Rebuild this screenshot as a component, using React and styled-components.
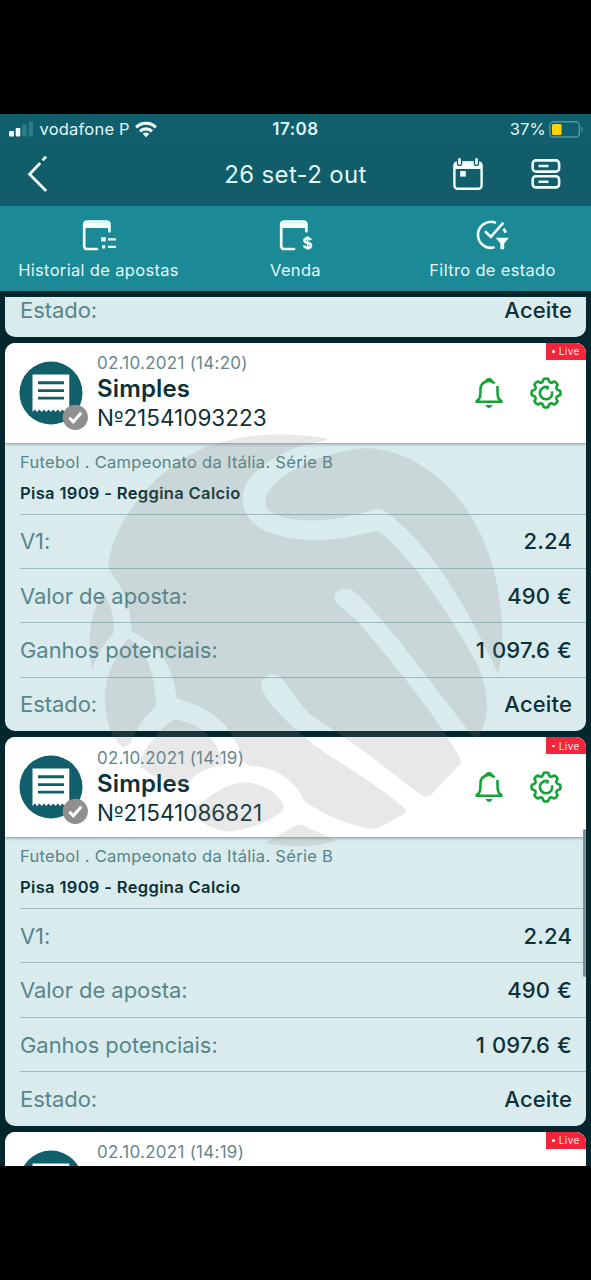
import styled, { createGlobalStyle } from 'styled-components';

const bets = [
  { id: 1, date: '02.10.2021 (14:20)', number: '21541093223' },
  { id: 2, date: '02.10.2021 (14:19)', number: '21541086821' },
  { id: 3, date: '02.10.2021 (14:19)' },
];

const rows = [
  { label: 'V1:', value: '2.24' },
  { label: 'Valor de aposta:', value: '490 €' },
  { label: 'Ganhos potenciais:', value: '1 097.6 €' },
  { label: 'Estado:', value: 'Aceite' },
];

const SignalIcon = () => (
  <svg width="25" height="16" viewBox="0 0 25 16">
    <rect x="0" y="10" width="5" height="5.6" rx="1" fill="#f2ffff" />
    <rect x="6.7" y="7" width="4.6" height="8.6" rx="1" fill="#f2ffff" />
    <rect x="13.2" y="3.6" width="4.4" height="12" rx="1" fill="#2b7d89" />
    <rect x="19.7" y="0.5" width="4.4" height="15.1" rx="1" fill="#2b7d89" />
  </svg>
);

const WifiIcon = () => (
  <svg width="22" height="17" viewBox="0 0 22 17" fill="none" stroke="#f2ffff" strokeWidth="3.1">
    <path d="M1.2 6.3a13.900 13.900 0 0 1 19.600 0" />
    <path d="M5 10.300a8.600 8.600 0 0 1 12 0" />
    <path d="M11 16.200l-3.300-3.400a4.700 4.700 0 0 1 6.600 0z" fill="#f2ffff" stroke="none" />
  </svg>
);

const BatteryIcon = () => (
  <svg width="35" height="17" viewBox="0 0 35 17">
    <rect x="0.8" y="0.8" width="29.6" height="15.2" rx="3.8" fill="none" stroke="#4d9aa5" strokeWidth="1.4" />
    <rect x="3" y="3" width="9.6" height="11" rx="1.6" fill="#ffd20a" />
    <path d="M32.400 5.800c1.600.8 1.600 4.400 0 5.200z" fill="#4d9aa5" />
  </svg>
);

const BackIcon = () => (
  <svg width="22" height="38" viewBox="0 0 22 38" fill="none" stroke="#f2ffff" strokeWidth="2.8">
    <path d="M19.200 36L2.600 19.300 13.200 8" />
    <path d="M15.600 5.400L19 1.600" />
  </svg>
);

const CalendarIcon = () => (
  <svg width="30" height="34" viewBox="0 0 30 34">
    <rect x="1.4" y="5.4" width="27.2" height="26.4" rx="3.2" fill="none" stroke="#f2ffff" strokeWidth="2.4" />
    <path d="M1 12V8a3.500 3.500 0 0 1 3.500-3.500h21A3.500 3.500 0 0 1 29 8v4z" fill="#f2ffff" />
    <rect x="3.8" y="-.2" width="5.4" height="9.2" rx="2.6" fill="#115d6a" />
    <rect x="20.8" y="-.2" width="5.4" height="9.2" rx="2.6" fill="#115d6a" />
    <rect x="5.1" y="1" width="2.8" height="7" rx="1.4" fill="#f2ffff" />
    <rect x="22.1" y="1" width="2.8" height="7" rx="1.4" fill="#f2ffff" />
    <rect x="7.2" y="14" width="5.6" height="5.6" fill="#f2ffff" />
  </svg>
);

const ListIcon = () => (
  <svg width="30" height="32" viewBox="0 0 30 32" fill="none" stroke="#f2ffff" strokeWidth="2.6">
    <rect x="1.7" y="2.4" width="26.4" height="11.2" rx="3.2" />
    <rect x="1.7" y="18.2" width="26.4" height="11.2" rx="3.2" />
    <path d="M7.500 8h10M7.500 23.800h10" />
  </svg>
);

const WindowShape = () => (
  <>
    <path
      d="M16 30H6a2.800 2.800 0 0 1-2.800-2.800V5.300A2.800 2.800 0 0 1 6 2.500h19.600a2.800 2.800 0 0 1 2.800 2.800v7"
      fill="none"
      stroke="#f2ffff"
      strokeWidth="2.7"
      strokeLinecap="round"
    />
    <path d="M3.200 3.500h25.200V9H3.200z" fill="#f2ffff" />
  </>
);

const HistoryIcon = () => (
  <svg width="36" height="32" viewBox="0 0 36 32">
    <WindowShape />
    <path d="M20.200 18.200h4.600v4.400h-4.600zM21 26.200h3.200v3.200H21z" fill="#f2ffff" />
    <path d="M27 20.400h8M27 27.800h8" stroke="#f2ffff" strokeWidth="2.2" />
  </svg>
);

const SaleIcon = () => (
  <svg width="36" height="32" viewBox="0 0 36 32">
    <WindowShape />
    <g fill="none" stroke="#f2ffff" strokeWidth="2.5">
      <path d="M32.800 21.200c-.5-1.400-1.700-1.900-3.200-1.900-2 0-3.200.9-3.200 2.300 0 3.500 6.700 1.200 6.700 4.800 0 1.500-1.400 2.400-3.400 2.400-1.900 0-3.300-.7-3.700-2.300" />
      <path d="M29.700 17.100v13.800" strokeWidth="1.6" />
    </g>
  </svg>
);

const FilterIcon = () => (
  <svg width="36" height="32" viewBox="0 0 36 32">
    <g fill="none" stroke="#f2ffff" strokeWidth="2.6" strokeLinecap="round">
      <path d="M20 3.500A13 13 0 1 0 18.600 28.600" />
      <path d="M10.800 13l5 4.800L27.800 4.400" />
    </g>
    <path d="M28.600 9.800l2.200 3.800" stroke="#f2ffff" strokeWidth="2.8" />
    <path d="M20.600 18.800H34L29.200 24.600v5.600h-3.800v-5.600z" fill="#f2ffff" />
  </svg>
);

const TicketIcon = () => (
  <svg width="70" height="72" viewBox="0 0 70 72">
    <circle cx="32" cy="32" r="31.5" fill="#105f6b" />
    <path
      d="M13.500 13.500h36.800V51l-2.300-2.600-2.300 2.600-2.300-2.600-2.300 2.600-2.300-2.600-2.300 2.600-2.300-2.600-2.300 2.600-2.300-2.600-2.300 2.600-2.300-2.600-2.300 2.600-2.300-2.600-2.300 2.600-2.300-2.600-2.300 2.600z"
      fill="#fff"
    />
    <path d="M19 21.800h26M19 29.600h26M19 37.100h26" stroke="#105f6b" strokeWidth="2.9" />
    <circle cx="56.3" cy="56.3" r="12.6" fill="#8f8f8f" />
    <path d="M50.300 56.800l4 4 8-9" fill="none" stroke="#fff" strokeWidth="3" />
  </svg>
);

const BellIcon = () => (
  <svg width="28" height="32" viewBox="0 0 28 32" fill="none" stroke="#14a336" strokeWidth="2.6">
    <path d="M19.600 6.400A8.300 8.300 0 0 0 5.500 12.600c0 6.200-.1 9.400-3.700 11.400v.8h24.400V24c-3.500-2-3.700-5.300-3.700-11.400V9" />
    <path d="M11.600 2.900q2.400-2.400 4.800 0z" fill="#14a336" strokeWidth="1.8" />
    <path d="M11.600 28.700q2.400 3.400 4.800 0z" fill="#14a336" strokeWidth="1.4" />
  </svg>
);

// eight teeth with rounded gaps between them
const teeth = Array.from({ length: 8 }, (_, i) => i * 45);
const gearPath = teeth
  .map((deg, i) => {
    const at = (r, a) => {
      const rad = ((deg + a - 90) * Math.PI) / 180;
      return `${(16 + r * Math.cos(rad)).toFixed(2)} ${(16 + r * Math.sin(rad)).toFixed(2)}`;
    };
    return `${i ? 'L' : 'M'}${at(14.2, -9.5)}Q${at(15, 0)} ${at(14.2, 9.5)}L${at(12.8, 12.5)}Q${at(10.2, 22.5)} ${at(12.8, 32.5)}`;
  })
  .join('');

const GearIcon = () => (
  <svg width="32" height="32" viewBox="0 0 32 32" fill="none" stroke="#14a336" strokeWidth="2.6" strokeLinejoin="round">
    <path d={`${gearPath}Z`} />
    <path d="M18.600 10.400a6.200 6.200 0 1 0 3.400 3.900" />
    <path d="M16.400 12.600l2.400-2" strokeWidth="1.6" />
  </svg>
);

const BallMark = () => (
  <Watermark viewBox="0 0 1320 1320">
    <path d="M740 55C620 35 480 40 370 85C230 145 110 290 85 425Q84 440 95 460C135 515 150 550 155 635C240 670 280 745 290 835C390 865 440 900 477 985C480 1020 490 1036 520 1038C600 1045 650 1090 672 1142C740 1190 810 1215 870 1226Q890 1228 910 1216L972 1182Q985 1173 972 1163C860 1070 760 1020 690 965C625 910 570 860 547 810C532 775 570 750 600 770C630 800 660 860 700 890C830 970 930 1055 1025 1126Q1040 1134 1055 1122L1138 1035Q1147 1025 1138 1010C1050 860 930 720 830 600L775 555C745 525 780 495 815 510C860 540 920 620 960 665L1175 945Q1186 962 1195 948C1240 880 1220 790 1185 720C1110 590 1010 430 905 340Q895 330 880 334C760 370 640 370 550 330C480 290 475 230 505 180C560 110 650 75 737 62Q744 58 740 55Z" />
    <path d="M855 85C730 95 600 155 563 220C540 265 570 285 640 298C720 308 800 295 880 268Q905 264 925 280C1060 390 1150 540 1255 762C1280 640 1265 490 1210 360C1140 200 1010 95 870 85Z" />
    <path d="M66 520C90 540 105 590 100 640C75 670 50 700 37 750C22 660 28 590 66 520Z" />
    <path d="M146 657C190 670 225 760 228 845Q228 860 216 870C190 895 170 925 152 970Q138 985 122 977C85 940 70 870 76 810C85 750 110 705 135 665Z" />
    <path d="M270 905Q285 895 305 903C370 920 415 960 430 1035C385 1040 345 1060 325 1088Q314 1100 298 1095C255 1085 215 1070 185 1043Q175 1033 182 1015C205 970 235 935 270 905Z" />
    <path d="M480 1088C530 1083 590 1110 610 1155Q615 1168 603 1177C560 1210 505 1228 445 1235C400 1230 350 1205 328 1170C370 1150 420 1095 480 1088Z" />
    <path d="M645 1217Q656 1210 670 1217L770 1262C700 1282 620 1282 555 1268Z" />
  </Watermark>
);

const DetailRow = ({ label, value, height }) => (
  <Row $height={height}>
    <Label>{label}</Label>
    <Value>{value}</Value>
  </Row>
);

const BetCard = ({ bet }) => (
  <Card>
    <CardHeader>
      <TicketIcon />
      <Summary>
        <BetDate>{bet.date}</BetDate>
        {bet.number && (
          <>
            <BetType>Simples</BetType>
            <BetNumber>N<sup>º</sup>{bet.number}</BetNumber>
          </>
        )}
      </Summary>
      <Actions>
        <BellIcon />
        <GearIcon />
      </Actions>
      <LiveBadge><i />Live</LiveBadge>
    </CardHeader>
    {bet.number && (
      <>
        <Match>
          <League>Futebol . Campeonato da Itália. Série B</League>
          <Teams>Pisa 1909 - Reggina Calcio</Teams>
        </Match>
        {rows.map((row) => (
          <DetailRow key={row.label} {...row} />
        ))}
      </>
    )}
  </Card>
);

const App = () => (
  <Screen>
    <GlobalStyle />
    <StatusBar>
      <Carrier>
        <SignalIcon />
        <StatusText>vodafone P</StatusText>
        <WifiIcon />
      </Carrier>
      <Clock>17:08</Clock>
      <Power>
        <StatusText>37%</StatusText>
        <BatteryIcon />
      </Power>
    </StatusBar>
    <NavBar>
      <BackIcon />
      <NavTitle>26 set-2 out</NavTitle>
      <NavActions>
        <CalendarIcon />
        <ListIcon />
      </NavActions>
    </NavBar>
    <Tabs>
      <Tab>
        <HistoryIcon />
        <TabLabel>Historial de apostas</TabLabel>
      </Tab>
      <Tab>
        <SaleIcon />
        <TabLabel>Venda</TabLabel>
      </Tab>
      <Tab>
        <FilterIcon />
        <TabLabel>Filtro de estado</TabLabel>
      </Tab>
    </Tabs>
    <List>
      <TailCard>
        <DetailRow label="Estado:" value="Aceite" height={26} />
      </TailCard>
      {bets.map((bet) => (
        <BetCard key={bet.id} bet={bet} />
      ))}
    </List>
    <BallMark />
    <ScrollThumb />
  </Screen>
);

export default App;

// Estilos
const GlobalStyle = createGlobalStyle`
  * {
    box-sizing: border-box;
  }

  body {
    margin: 0;
    background: #000;
    font-family: Inter, 'Liberation Sans', sans-serif;
  }

  svg {
    display: block;
    flex-shrink: 0;
  }
`;

const Screen = styled.div`
  position: relative;
  width: 591px;
  height: 1280px;
  padding: 114px 0;
  display: flex;
  flex-direction: column;
  overflow: hidden;
  background: #000;
  color: #e0f8fa;
`;

const StatusBar = styled.div`
  height: 30px;
  flex-shrink: 0;
  padding: 0 7px 0 9px;
  display: grid;
  grid-template-columns: 1fr auto 1fr;
  align-items: center;
  background: #115f6c;
`;

const Carrier = styled.div`
  display: flex;
  align-items: center;
  gap: 5.5px;
`;

const Power = styled.div`
  display: flex;
  align-items: center;
  justify-content: flex-end;
  gap: 3px;
`;

const StatusText = styled.span`
  font-size: 16.5px;
  letter-spacing: 0.2px;
  white-space: nowrap;
`;

const Clock = styled.span`
  margin-right: 2px;
  font-size: 17px;
  font-weight: 600;
  letter-spacing: 0.5px;
`;

const NavBar = styled.div`
  height: 62px;
  flex-shrink: 0;
  padding: 0 30px 2px;
  display: grid;
  grid-template-columns: 1fr auto 1fr;
  align-items: center;
  background: #115d6a;

  > svg {
    margin-left: -3px;
  }
`;

const NavTitle = styled.h1`
  margin: 0;
  font-size: 24px;
  font-weight: 400;
  letter-spacing: 0.35px;
`;

const NavActions = styled.div`
  display: flex;
  align-items: center;
  justify-content: flex-end;
  gap: 48px;
`;

const Tabs = styled.div`
  height: 85px;
  flex-shrink: 0;
  display: grid;
  grid-template-columns: repeat(3, 197px);
  background: #1c8996;
`;

const Tab = styled.div`
  display: flex;
  flex-direction: column;
  align-items: center;
  padding-top: 13px;
  gap: 9px;
`;

const TabLabel = styled.span`
  font-size: 16.5px;
  line-height: 21px;
  letter-spacing: 0.32px;
  white-space: nowrap;
`;

const List = styled.div`
  flex: 1;
  min-height: 0;
  overflow: hidden;
  border-top: 6px solid #04262d;
  padding: 0 5px;
  display: flex;
  flex-direction: column;
  gap: 6.4px;
  background: #04262d;
`;

const Card = styled.section`
  height: 388.1px;
  flex-shrink: 0;
  border-radius: 10px;
  overflow: hidden;
  background: #d9ebed;
`;

const TailCard = styled(Card)`
  height: 39.6px;
  border-radius: 0 0 10px 10px;
`;

const CardHeader = styled.header`
  position: relative;
  height: 100px;
  padding-left: 14px;
  display: flex;
  align-items: flex-start;
  background: #fff;
  box-shadow: 0 1px 3px rgba(30, 70, 75, 0.5);

  > svg {
    margin-top: 18px;
  }
`;

const Summary = styled.div`
  margin: 9.2px 0 0 8px;
  flex: 1;
  display: flex;
  flex-direction: column;
  white-space: nowrap;
`;

const BetDate = styled.span`
  color: #66878b;
  font-size: 17px;
  line-height: 22px;
  letter-spacing: 0.26px;
`;

const BetType = styled.span`
  color: #0b3238;
  font-size: 24px;
  font-weight: 600;
  line-height: 30px;
  letter-spacing: 0.15px;
`;

const BetNumber = styled.span`
  color: #0b3238;
  font-size: 22.5px;
  line-height: 28px;

  sup {
    font-family: 'DejaVu Sans', sans-serif;
    font-size: 20px;
    line-height: 0;
    vertical-align: baseline;
  }
`;

const Actions = styled.div`
  margin-top: 34px;
  display: flex;
  align-items: center;
  gap: 27px;
  padding-right: 24px;
`;

const LiveBadge = styled.span`
  position: absolute;
  top: 0;
  right: 0;
  width: 40px;
  height: 17px;
  display: flex;
  align-items: center;
  justify-content: center;
  gap: 4px;
  background: #f4243a;
  color: #ffe4e6;
  font-size: 10px;
  letter-spacing: 0.4px;

  i {
    width: 2.5px;
    height: 2.5px;
    border-radius: 50%;
    background: #ffe4e6;
  }
`;

const Match = styled.div`
  height: 70.6px;
  padding: 8px 15px 0;
  display: flex;
  flex-direction: column;
  gap: 9px;
  white-space: nowrap;
`;

const League = styled.span`
  color: #55858a;
  font-size: 16.5px;
  line-height: 22px;
  letter-spacing: 0.29px;
`;

const Teams = styled.span`
  color: #0b3238;
  font-size: 16.5px;
  font-weight: 600;
  line-height: 22px;
  letter-spacing: 0.35px;
`;

const Row = styled.div`
  height: ${({ $height }) => $height || 54.4}px;
  margin-left: 15px;
  padding-right: 14px;
  display: flex;
  align-items: center;
  justify-content: space-between;
  border-top: ${({ $height }) => ($height ? 'none' : '1px solid #9dbabe')};
`;

const Label = styled.span`
  color: #57868b;
  font-size: 22px;
  letter-spacing: -0.06px;
`;

const Value = styled.span`
  color: #0b3238;
  font-size: 22px;
  font-weight: 500;
  letter-spacing: 0.15px;
  word-spacing: 0.9px;
`;

const Watermark = styled.svg`
  position: absolute;
  left: 80px;
  top: 420px;
  width: 440px;
  height: 440px;
  fill: rgba(130, 130, 130, 0.18);
  pointer-events: none;
`;

const ScrollThumb = styled.div`
  position: absolute;
  right: 5px;
  top: 829px;
  width: 3px;
  height: 148px;
  border-radius: 2px;
  background: #7f9396;
`;
